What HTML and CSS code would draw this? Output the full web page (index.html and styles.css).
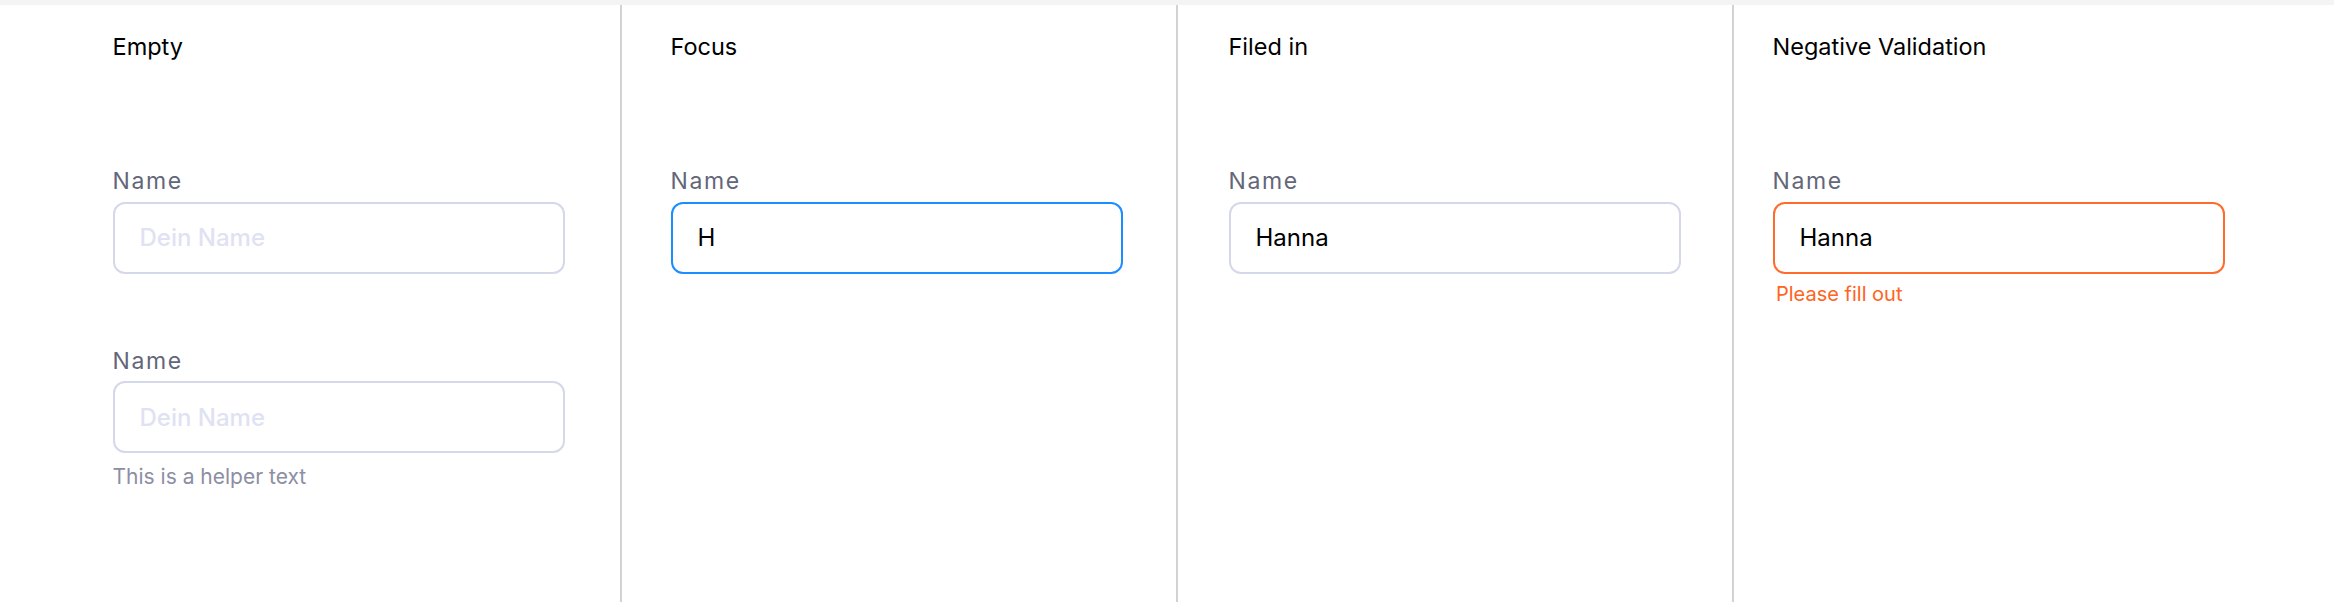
FILE: index.html
```html
<!DOCTYPE html>
<html lang="en">
<head>
<meta charset="utf-8">
<title>Input states</title>
<link rel="stylesheet" href="styles.css">
</head>
<body>
<div class="topbar"></div>
<main class="board">
  <section class="col col-1">
    <h2 class="col-title">Empty</h2>
    <div class="field">
      <label class="field-label">Name</label>
      <input class="field-input" type="text" placeholder="Dein Name">
    </div>
    <div class="field field-second">
      <label class="field-label">Name</label>
      <input class="field-input" type="text" placeholder="Dein Name">
      <p class="field-helper">This is a helper text</p>
    </div>
  </section>
  <section class="col col-2">
    <h2 class="col-title">Focus</h2>
    <div class="field">
      <label class="field-label">Name</label>
      <input class="field-input is-focus" type="text" value="H" placeholder="Dein Name">
    </div>
  </section>
  <section class="col col-3">
    <h2 class="col-title">Filed in</h2>
    <div class="field">
      <label class="field-label">Name</label>
      <input class="field-input" type="text" value="Hanna" placeholder="Dein Name">
    </div>
  </section>
  <section class="col col-4">
    <h2 class="col-title">Negative Validation</h2>
    <div class="field">
      <label class="field-label">Name</label>
      <input class="field-input is-error" type="text" value="Hanna" placeholder="Dein Name">
      <p class="field-error">Please fill out</p>
    </div>
  </section>
</main>
</body>
</html>
```
FILE: styles.css
```css
* {
  box-sizing: border-box;
}

html, body {
  margin: 0;
  padding: 0;
  background: #ffffff;
  font-family: Inter, "Noto Sans", "Liberation Sans", sans-serif;
}

.topbar {
  height: 5px;
  background: #f4f4f5;
}

.board {
  display: flex;
  height: 597px;
}

.col {
  display: flex;
  flex-direction: column;
  padding-top: 28px;
}

.col-1 {
  width: 620px;
  padding-left: 112.5px;
}

.col-2 {
  width: 556px;
  border-left: 2px solid #d2d2d4;
  padding-left: 48.5px;
}

.col-3 {
  width: 556px;
  border-left: 2px solid #d2d2d4;
  padding-left: 50.5px;
}

.col-4 {
  flex: 1;
  border-left: 2px solid #d2d2d4;
  padding-left: 38.5px;
}

.col-title {
  margin: 0;
  font-size: 23.5px;
  line-height: 28px;
  font-weight: 400;
  color: #000000;
}

.field {
  display: flex;
  flex-direction: column;
  width: 452px;
  margin-top: 106px;
}

.field-second {
  margin-top: 73px;
}

.field-label {
  font-size: 23px;
  line-height: 28px;
  letter-spacing: 1.6px;
  color: #636678;
  margin-bottom: 6.5px;
}

.field-input {
  width: 452px;
  height: 72px;
  margin: 0;
  padding: 0 25px;
  border: 2px solid #d5d8ea;
  border-radius: 12px;
  background: #ffffff;
  font-family: Inter, "Noto Sans", "Liberation Sans", sans-serif;
  font-size: 24px;
  font-weight: 400;
  color: #000000;
  outline: none;
}

.field-input::placeholder {
  color: #dfe2f3;
  font-weight: 500;
  opacity: 1;
}

.field-input.is-focus {
  border-color: #1a8dff;
}

.field-input.is-error {
  border-color: #ff6b2b;
}

.field-helper {
  margin: 11.5px 0 0;
  font-size: 21px;
  line-height: 24px;
  color: #8c8ea4;
}

.field-error {
  margin: 8px 0 0;
  padding-left: 3.5px;
  font-size: 20px;
  line-height: 24px;
  color: #ff6420;
}
```
